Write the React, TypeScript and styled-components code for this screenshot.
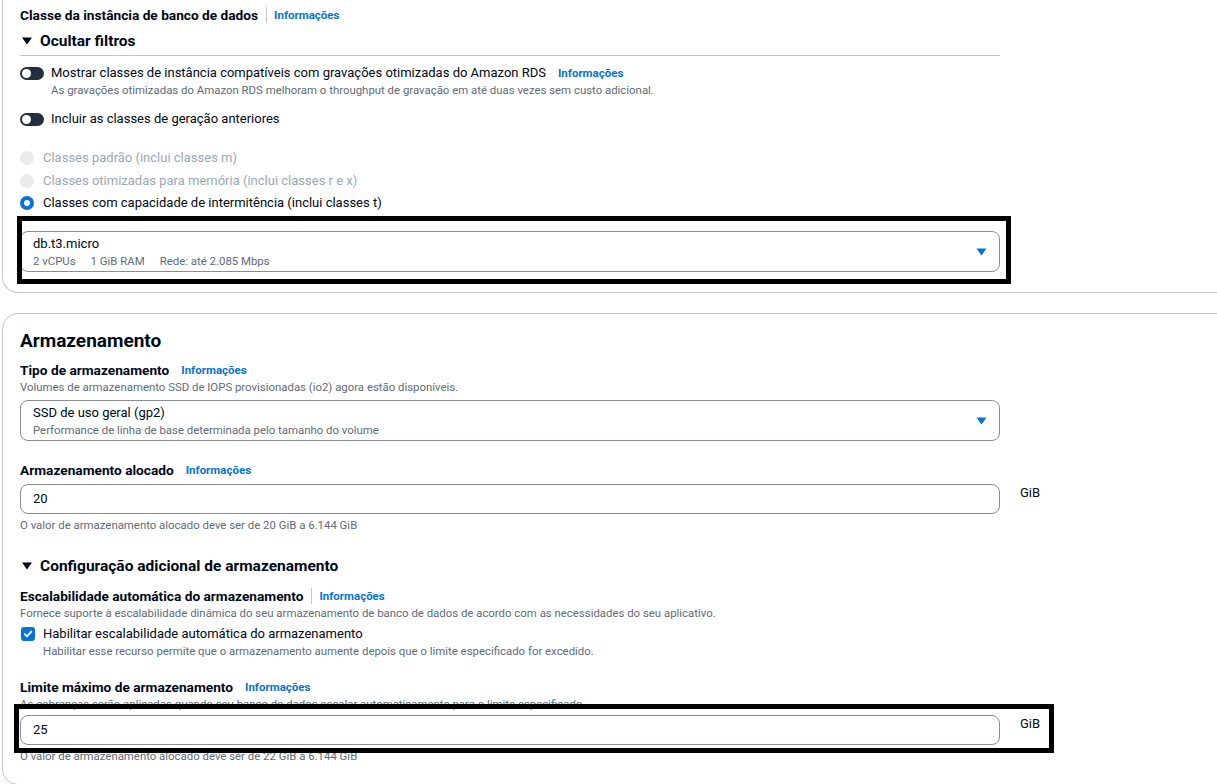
import React from "react";
import styled, { createGlobalStyle, css } from "styled-components";

const Global = createGlobalStyle`
  html, body { margin: 0; padding: 0; background: #ffffff; }
  body { font-family: Roboto, "Open Sans", Arial, sans-serif; color: #000716; }
  * { box-sizing: border-box; }
`;

const Page = styled.div`
  width: 1217px;
  height: 784px;
  overflow: hidden;
  padding-left: 2px;
  display: flex;
  flex-direction: column;
  gap: 20px;
`;

const Card = styled.section<{ $cutTop?: boolean }>`
  width: 1240px;
  flex-shrink: 0;
  border: 1px solid #c6c6cd;
  border-radius: 16px;
  padding: 15px 0 20px 17px;
  display: flex;
  flex-direction: column;
  ${(p) =>
    p.$cutTop &&
    css`
      border-top: none;
      border-top-left-radius: 0;
      border-top-right-radius: 0;
      padding-top: 5px;
    `}
`;

const Heading = styled.h2`
  margin: 0;
  font-size: 19px;
  line-height: 24px;
  font-weight: 700;
`;

const LabelRow = styled.div<{ $mt?: number; $lh?: number }>`
  display: flex;
  align-items: center;
  margin-top: ${(p) => p.$mt ?? 0}px;
  height: ${(p) => p.$lh ?? 18}px;
`;

const Label = styled.span`
  font-size: 13.7px;
  font-weight: 700;
  line-height: 18px;
`;

const Sep = styled.span`
  width: 1px;
  height: 16px;
  background: #c6c6cd;
  margin: 0 7px 0 8px;
`;

const Info = styled.a<{ $ml?: number }>`
  font-size: 11.5px;
  font-weight: 700;
  color: #0972d3;
  text-decoration: none;
  margin-left: ${(p) => p.$ml ?? 0}px;
  cursor: pointer;
`;

const Desc = styled.div<{ $mt?: number }>`
  font-size: 11.4px;
  line-height: 16px;
  color: #5f6b7a;
  margin-top: ${(p) => p.$mt ?? 0}px;
  white-space: nowrap;
`;

const Expander = styled.div<{ $mt?: number; $divider?: boolean }>`
  display: flex;
  align-items: center;
  gap: 8px;
  margin-top: ${(p) => p.$mt ?? 0}px;
  font-size: 15.5px;
  font-weight: 700;
  line-height: 20px;
  padding-left: 2px;
  ${(p) =>
    p.$divider &&
    css`
      width: 980px;
      padding-bottom: 4px;
      border-bottom: 1px solid #c6c6cd;
    `}
`;

const ToggleRow = styled.div<{ $mt?: number }>`
  display: flex;
  align-items: flex-start;
  gap: 7px;
  margin-top: ${(p) => p.$mt ?? 0}px;
`;

const Toggle = styled.span`
  width: 24px;
  height: 13px;
  border-radius: 7px;
  background: #232f3e;
  position: relative;
  flex-shrink: 0;
  margin-top: 3px;
  &::after {
    content: "";
    position: absolute;
    left: 2px;
    top: 2px;
    width: 9px;
    height: 9px;
    border-radius: 50%;
    background: #ffffff;
  }
`;

const Col = styled.div`
  display: flex;
  flex-direction: column;
`;

const Text = styled.span<{ $disabled?: boolean }>`
  font-size: 13px;
  line-height: 18px;
  color: ${(p) => (p.$disabled ? "#9ba7b6" : "#000716")};
  white-space: nowrap;
`;

const RadioGroup = styled.div`
  display: flex;
  flex-direction: column;
  margin-top: 19px;
`;

const RadioRow = styled.div`
  display: flex;
  align-items: center;
  gap: 9px;
  height: 22.5px;
`;

const Radio = styled.span<{ $state: "disabled" | "checked" }>`
  width: 14px;
  height: 14px;
  border-radius: 50%;
  flex-shrink: 0;
  ${(p) =>
    p.$state === "disabled"
      ? css`
          background: #e9ebed;
        `
      : css`
          background: #ffffff;
          border: 4px solid #0972d3;
        `}
`;

const Annotated = styled.div<{ $mt?: number }>`
  position: relative;
  margin-top: ${(p) => p.$mt ?? 0}px;
  width: max-content;
`;

const Frame = styled.div<{ $t: number; $l: number; $r: number; $b: number }>`
  position: absolute;
  top: ${(p) => p.$t}px;
  left: ${(p) => p.$l}px;
  right: ${(p) => p.$r}px;
  bottom: ${(p) => p.$b}px;
  border: 5px solid #000000;
  pointer-events: none;
`;

const Select = styled.div<{ $mt?: number }>`
  width: 980px;
  height: 41px;
  border: 1px solid #8c8c94;
  border-radius: 8px;
  padding: 1px 12px 0 12px;
  display: flex;
  align-items: center;
  justify-content: space-between;
  margin-top: ${(p) => p.$mt ?? 0}px;
  background: #fff;
`;

const SubLine = styled.div`
  display: flex;
  gap: 15px;
  font-size: 11.4px;
  line-height: 16px;
  color: #5f6b7a;
`;

const InputRow = styled.div<{ $mt?: number }>`
  display: flex;
  align-items: flex-start;
  gap: 20px;
  width: max-content;
  margin-top: ${(p) => p.$mt ?? 0}px;
`;

const Input = styled.div`
  width: 980px;
  height: 30px;
  border: 1px solid #8c8c94;
  border-radius: 8px;
  padding: 0 12px;
  display: flex;
  align-items: center;
  font-size: 13px;
  background: #fff;
`;

const Unit = styled.span`
  font-size: 13px;
  line-height: 17px;
`;

const CheckRow = styled.div<{ $mt?: number }>`
  display: flex;
  align-items: flex-start;
  gap: 8px;
  margin-top: ${(p) => p.$mt ?? 0}px;
  padding-left: 1px;
`;

const Checkbox = styled.span`
  width: 14px;
  height: 14px;
  border-radius: 3px;
  background: #0972d3;
  display: flex;
  align-items: center;
  justify-content: center;
  flex-shrink: 0;
  margin-top: 2px;
`;

const Caret = () => (
  <svg width="11" height="8" viewBox="0 0 11 8">
    <path d="M0.5 0.5 H10.5 L5.5 7.5 Z" fill="#0972d3" />
  </svg>
);

const ExpandIcon = () => (
  <svg width="10" height="8" viewBox="0 0 10 8">
    <path d="M0 0.5 H10 L5 7.5 Z" fill="#000716" />
  </svg>
);

const Check = () => (
  <svg width="10" height="10" viewBox="0 0 10 10">
    <path d="M1.8 5.2 L4 7.4 L8.3 2.6" fill="none" stroke="#fff" strokeWidth="1.9" strokeLinecap="round" strokeLinejoin="round" />
  </svg>
);

export default function App() {
  return (
    <>
      <Global />
      <Page>
        <Card $cutTop>
          <LabelRow $lh={20}>
            <Label>Classe da instância de banco de dados</Label>
            <Sep />
            <Info>Informações</Info>
          </LabelRow>
          <Expander $mt={6} $divider>
            <ExpandIcon />
            Ocultar filtros
          </Expander>
          <ToggleRow $mt={8}>
            <Toggle />
            <Col>
              <LabelRow>
                <Text>Mostrar classes de instância compatíveis com gravações otimizadas do Amazon RDS</Text>
                <Info $ml={12}>Informações</Info>
              </LabelRow>
              <Desc>As gravações otimizadas do Amazon RDS melhoram o throughput de gravação em até duas vezes sem custo adicional.</Desc>
            </Col>
          </ToggleRow>
          <ToggleRow $mt={12}>
            <Toggle />
            <Text>Incluir as classes de geração anteriores</Text>
          </ToggleRow>
          <RadioGroup>
            <RadioRow>
              <Radio $state="disabled" />
              <Text $disabled>Classes padrão (inclui classes m)</Text>
            </RadioRow>
            <RadioRow>
              <Radio $state="disabled" />
              <Text $disabled>Classes otimizadas para memória (inclui classes r e x)</Text>
            </RadioRow>
            <RadioRow>
              <Radio $state="checked" />
              <Text>Classes com capacidade de intermitência (inclui classes t)</Text>
            </RadioRow>
          </RadioGroup>
          <Annotated $mt={16}>
            <Select>
              <Col>
                <Text>db.t3.micro</Text>
                <SubLine>
                  <span>2 vCPUs</span>
                  <span>1 GiB RAM</span>
                  <span>Rede: até 2.085 Mbps</span>
                </SubLine>
              </Col>
              <Caret />
            </Select>
            <Frame $t={-15} $l={-3} $r={-11} $b={-12} />
          </Annotated>
        </Card>

        <Card>
          <Heading>Armazenamento</Heading>
          <LabelRow $mt={8}>
            <Label>Tipo de armazenamento</Label>
            <Info $ml={12}>Informações</Info>
          </LabelRow>
          <Desc>Volumes de armazenamento SSD de IOPS provisionadas (io2) agora estão disponíveis.</Desc>
          <Select $mt={5}>
            <Col>
              <Text>SSD de uso geral (gp2)</Text>
              <SubLine>
                <span>Performance de linha de base determinada pelo tamanho do volume</span>
              </SubLine>
            </Col>
            <Caret />
          </Select>
          <LabelRow $mt={20}>
            <Label>Armazenamento alocado</Label>
            <Info $ml={12}>Informações</Info>
          </LabelRow>
          <InputRow $mt={5}>
            <Input>20</Input>
            <Unit>GiB</Unit>
          </InputRow>
          <Desc $mt={3}>O valor de armazenamento alocado deve ser de 20 GiB a 6.144 GiB</Desc>
          <Expander $mt={23}>
            <ExpandIcon />
            Configuração adicional de armazenamento
          </Expander>
          <LabelRow $mt={11}>
            <Label>Escalabilidade automática do armazenamento</Label>
            <Sep />
            <Info>Informações</Info>
          </LabelRow>
          <Desc>Fornece suporte à escalabilidade dinâmica do seu armazenamento de banco de dados de acordo com as necessidades do seu aplicativo.</Desc>
          <CheckRow $mt={4}>
            <Checkbox>
              <Check />
            </Checkbox>
            <Col>
              <Text>Habilitar escalabilidade automática do armazenamento</Text>
              <Desc>Habilitar esse recurso permite que o armazenamento aumente depois que o limite especificado for excedido.</Desc>
            </Col>
          </CheckRow>
          <LabelRow $mt={19}>
            <Label>Limite máximo de armazenamento</Label>
            <Info $ml={12}>Informações</Info>
          </LabelRow>
          <Desc>As cobranças serão aplicadas quando seu banco de dados escalar automaticamente para o limite especificado.</Desc>
          <Annotated $mt={3}>
            <InputRow>
              <Input>25</Input>
              <Unit>GiB</Unit>
            </InputRow>
            <Frame $t={-11} $l={-6} $r={-14} $b={-8} />
          </Annotated>
          <Desc $mt={3}>O valor de armazenamento alocado deve ser de 22 GiB a 6.144 GiB</Desc>
        </Card>
      </Page>
    </>
  );
}
